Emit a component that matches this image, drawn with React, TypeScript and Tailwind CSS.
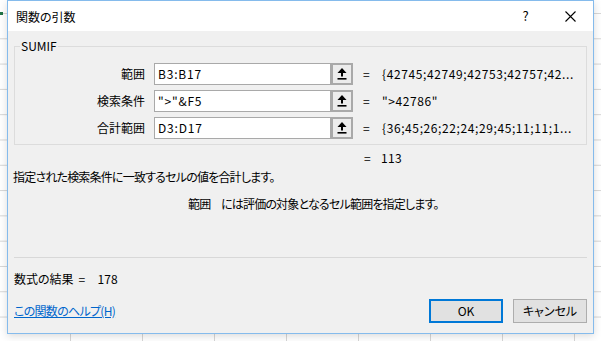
import React from 'react';

const FONT = "font-['Noto_Sans_CJK_JP',sans-serif] [font-feature-settings:'palt']";

function RefButton() {
  return (
    <div className="flex h-[22px] w-[22px] items-center justify-center border-2 border-[#a9a9a9] bg-[#ececec]">
      <svg width="10" height="12" viewBox="0 0 10 12">
        <polygon points="5,0 0.5,5 9.5,5" fill="#000" />
        <rect x="4" y="4.5" width="2" height="4" fill="#000" />
        <rect x="0.5" y="10" width="9" height="1.6" fill="#000" />
      </svg>
    </div>
  );
}

const args = [
  { label: '範囲', input: 'B3:B17', value: '{42745;42749;42753;42757;42...' },
  { label: '検索条件', input: '">"&F5', value: '">42786"' },
  { label: '合計範囲', input: 'D3:D17', value: '{36;45;26;22;24;29;45;11;11;1...' },
];

export default function App() {
  return (
    <div
      className={`relative h-[341px] w-[601px] overflow-hidden bg-white bg-[linear-gradient(to_right,#d6d6d6_1px,transparent_1px),linear-gradient(to_bottom,#d6d6d6_1px,transparent_1px)] bg-[size:72px_25.3px] bg-[position:-2px_13px] text-[12px] leading-[16px] text-black ${FONT}`}
    >
      <div className="absolute left-0 top-[12px] h-[3px] w-[3px] bg-[#217346]" />

      {/* dialog window */}
      <div className="absolute left-[7px] top-0 flex h-[334px] w-[587px] flex-col border border-[#85bbec] bg-[#f0f0f0] shadow-[0_2px_8px_rgba(0,0,0,0.15)]">
        {/* title bar */}
        <div className="flex h-[30px] items-center bg-white pl-[8px]">
          <span className="flex-1 pt-[1px]">関数の引数</span>
          <div className="flex h-full w-[45px] items-center justify-center text-[13px]">?</div>
          <div className="flex h-full w-[45px] items-center justify-center">
            <svg width="11" height="11" viewBox="0 0 11 11">
              <path d="M0.5 0.5 L10.5 10.5 M10.5 0.5 L0.5 10.5" stroke="#000" strokeWidth="1.1" />
            </svg>
          </div>
        </div>

        {/* body */}
        <div className="flex flex-1 flex-col px-[6px]">
          <fieldset className="mt-[8px] border border-[#dcdcdc] pb-[5px]">
            <legend className="ml-[5px] px-[1px] leading-[14px]">SUMIF</legend>
            <div className="flex flex-col gap-[5px] pt-[10px]">
              {args.map((a) => (
                <div key={a.label} className="flex h-[22px] items-center">
                  <div className="w-[130px] text-right">{a.label}</div>
                  <div className="ml-[9px] flex h-[22px] w-[177px] items-center border border-[#a9a9a9] bg-white pl-[3px] tracking-[0.8px]">
                    {a.input}
                  </div>
                  <RefButton />
                  <div className="ml-[10px] w-[19px]">=</div>
                  <div className="whitespace-nowrap tracking-[0.6px]">{a.value}</div>
                </div>
              ))}
            </div>
          </fieldset>

          <div className="mt-[5px] flex pl-[350px]">
            <span className="w-[17px]">=</span>
            <span className="tracking-[0.3px]">113</span>
          </div>

          <div className="ml-[-1px] mt-[3px] tracking-[-0.8px]">指定された検索条件に一致するセルの値を合計します。</div>

          <div className="mt-[11px] flex pl-[174px] tracking-[-0.8px]">
            <span className="w-[33px]">範囲</span>
            <span>には評価の対象となるセル範囲を指定します。</span>
          </div>

          <div className="mt-[45px] h-px bg-[#d8d8d8]" />

          <div className="mt-[13px] flex">
            <span>数式の結果</span>
            <span className="ml-[5px] w-[19px]">=</span>
            <span>178</span>
          </div>

          <div className="mt-[12px] flex h-[24px] items-center">
            <a className="flex-1 text-[#0066cc] underline tracking-[-0.7px]">この関数のヘルプ(H)</a>
            <button className="flex h-[24px] w-[74px] items-center justify-center border-2 border-[#0078d7] bg-[#e1e1e1]">
              OK
            </button>
            <button className="ml-[10px] flex h-[24px] w-[74px] items-center justify-center border border-[#adadad] bg-[#e1e1e1]">
              キャンセル
            </button>
          </div>
        </div>
      </div>
    </div>
  );
}
